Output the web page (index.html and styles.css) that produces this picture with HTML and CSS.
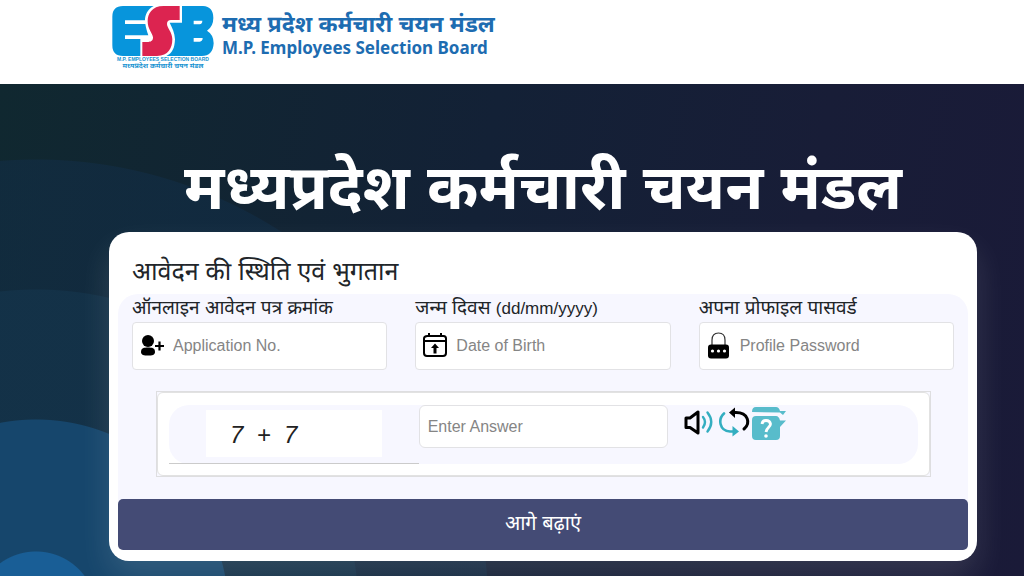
FILE: index.html
```html
<!DOCTYPE html>
<html lang="hi">
<head>
<meta charset="utf-8">
<meta name="viewport" content="width=device-width, initial-scale=1">
<title>M.P. Employees Selection Board</title>
<link rel="stylesheet" href="styles.css">
</head>
<body>
<header class="site-header">
  <a class="brand" href="#">
    <span class="brand-mark">
      <svg class="logo" viewBox="0 0 304 150" role="img" aria-label="ESB">
        <path fill="#0795dc" d="M32 0H124C106 10 98 26 98 43H38V54H99C101 66 104 76 108 88H38V99H84V150H32Q0 150 0 118V32Q0 0 32 0Z"/>
        <path fill="#dc2450" d="M202 0H154C118 0 106 24 106 46C106 70 120 80 122 94C122 104 116 108 108 108H90V150H134C168 150 180 126 180 100C180 78 164 66 164 54C164 46 168 42 176 42H202Z"/>
        <path fill="#0795dc" fill-rule="evenodd" d="M209 0H272Q303 2 303 36Q303 62 284 74Q304 86 304 112Q302 150 268 150H162C180 142 187 126 188 100C187 80 180 66 172 50H209ZM244 44V55H262Q270 54 270 44ZM244 96V107H262Q271 106 271 96Z"/>
      </svg>
      <span class="mark-caption" lang="en">M.P. EMPLOYEES SELECTION BOARD</span>
      <span class="mark-caption mark-caption-hi">मध्यप्रदेश कर्मचारी चयन मंडल</span>
    </span>
    <span class="brand-text">
      <span class="brand-hi">मध्य प्रदेश कर्मचारी चयन मंडल</span>
      <span class="brand-en" lang="en">M.P. Employees Selection Board</span>
    </span>
  </a>
</header>
<main class="hero">
  <h1 class="hero-title">मध्यप्रदेश कर्मचारी चयन मंडल</h1>
  <form class="card">
    <h2 class="card-title">आवेदन की स्थिति एवं भुगतान</h2>
    <div class="panel">
      <div class="fields">
        <div class="field">
          <label class="field-label" for="app-no">ऑनलाइन आवेदन पत्र क्रमांक</label>
          <div class="field-box">
            <svg class="field-icon" viewBox="0 0 26 28" aria-hidden="true"><circle cx="8" cy="9" r="6"/><path d="M1 20C1 16 4 15.500 8 15.500S15 16 15 20C15 23 12 23.500 8 23.500S1 23 1 20Z"/><path d="M15 14H24M19.500 9.500V18.500" fill="none" stroke="#000" stroke-width="2.200"/></svg>
            <input class="field-input" id="app-no" type="text" placeholder="Application No.">
          </div>
        </div>
        <div class="field">
          <label class="field-label" for="dob">जन्म दिवस <span class="format">(dd/mm/yyyy)</span></label>
          <div class="field-box">
            <svg class="field-icon" viewBox="0 0 26 28" aria-hidden="true"><path d="M4.500 4H20.500Q23 4 23 6.500V21Q23 24 20 24H4Q1 24 1 21V6.500Q1 4 4.500 4ZM1 9H23M6 1V4M18 1V4" fill="none" stroke="#000" stroke-width="2"/><path d="M12 11.500L16 16H13.500V21.500H10.500V16H8Z"/></svg>
            <input class="field-input" id="dob" type="text" placeholder="Date of Birth">
          </div>
        </div>
        <div class="field">
          <label class="field-label" for="password">अपना प्रोफाइल पासवर्ड</label>
          <div class="field-box">
            <svg class="field-icon" viewBox="0 0 26 28" aria-hidden="true"><path d="M5 13V8Q5 1 11.500 1T18 8V13" fill="none" stroke="#333" stroke-width="1.200"/><rect x="1" y="12.500" width="21" height="14" rx="3"/><g fill="#fff"><circle cx="5.500" cy="19" r="1.600"/><circle cx="11.500" cy="19" r="1.600"/><circle cx="17.500" cy="19" r="1.600"/></g></svg>
            <input class="field-input" id="password" type="password" placeholder="Profile Password">
          </div>
        </div>
      </div>
      <div class="captcha">
        <div class="captcha-inner">
          <div class="captcha-row">
            <div class="captcha-question"><output class="captcha-sum">7&nbsp; +&nbsp; 7</output></div>
            <input class="answer" type="text" placeholder="Enter Answer" aria-label="Enter Answer">
            <div class="tools">
              <button class="tool" type="button" aria-label="Play audio"><svg viewBox="0 0 34 36" aria-hidden="true"><path d="M2 12H6L14 6V27L6 21.500H2Z" fill="none" stroke="#000" stroke-width="3" stroke-linejoin="round"/><path d="M19 11Q23 16 19 21.500M23.500 6.500Q31 16 23.500 25.500" fill="none" stroke="#33aec0" stroke-width="2.400" stroke-linecap="round"/></svg></button>
              <button class="tool" type="button" aria-label="Refresh"><svg viewBox="0 0 34 36" aria-hidden="true"><path d="M6 7.500C0 13 1 24.500 12 25.500H16" fill="none" stroke="#33aec0" stroke-width="2.600" stroke-linecap="round"/><path d="M14.500 20L21 25.500L14.500 30.500Z" fill="#33aec0"/><path d="M15 6.500H18C30 6.500 33 17 26 23" fill="none" stroke="#000" stroke-width="3" stroke-linecap="round"/><path d="M17 1.500L11 6.500L17 12Z"/></svg></button>
              <button class="tool" type="button" aria-label="Help"><svg viewBox="0 0 34 36" aria-hidden="true"><g fill="#58bccb"><path d="M0 6Q0 1 4 1H24Q27 1 28 5H34L31 9L28 6.500Z"/><path d="M4 10H24Q27 10 28 14.500H34L28 21V30Q28 34 24 34H4Q0 34 0 30V14Q0 10 4 10Z"/></g><path d="M10 18Q10.500 14.500 14 14.500Q18 14.500 18.500 18C18.500 21 14.500 21.500 14 26" fill="none" stroke="#fff" stroke-width="2.800"/><circle cx="14" cy="30" r="1.800" fill="#fff"/></svg></button>
            </div>
          </div>
        </div>
      </div>
      <button class="submit" type="submit">आगे बढ़ाएं</button>
    </div>
  </form>
</main>
</body>
</html>
```
FILE: styles.css
```css
* { box-sizing: border-box; }
body {
  margin: 0;
  min-height: 100vh;
  display: flex;
  flex-direction: column;
  background: #161d34;
  color: #212529;
  font-family: "Liberation Sans", Arial, "Noto Sans Devanagari", sans-serif;
}
.site-header { height: 84px; padding: 6px 112px; background: #fff; }
.brand { display: inline-flex; gap: 8px; color: #1d6cb1; text-decoration: none; }
.brand-mark { width: 102px; display: flex; flex-direction: column; align-items: center; }
.logo { display: block; width: 102px; height: 50px; }
.mark-caption { color: #1893d1; font-size: 5px; line-height: 6px; font-weight: 700; white-space: nowrap; }
.mark-caption-hi { font-size: 7px; line-height: 8px; }
.brand-text { display: flex; flex-direction: column; padding-top: 5px; }
.brand-hi { font-size: 23px; line-height: 26px; font-weight: 700; white-space: nowrap; }
.brand-en { font-family: "Noto Sans", "Open Sans", sans-serif; font-size: 17px; line-height: 22px; font-weight: 700; white-space: nowrap; }
.hero {
  flex: 1;
  padding: 60px 47px 15px 109px;
  background:
    radial-gradient(circle at 36px 528px, #195e96 0 60px, #16466c 61px 192px, rgba(20, 52, 77, .8) 193px 322px, rgba(18, 46, 72, .55) 323px 452px, transparent 453px),
    linear-gradient(100deg, #102830 0%, #132136 45%, #181d37 75%, #1a1a38 100%);
}
.hero-title {
  margin: 0;
  height: 88px;
  color: #fff;
  font-size: 62px;
  line-height: 88px;
  font-weight: 700;
  text-align: center;
  white-space: nowrap;
}
.card {
  padding: 16px 9px 11px;
  border-radius: 20px;
  background: #fff;
  box-shadow: 0 16px 32px rgba(255, 255, 255, .12);
}
.card-title { margin: 0; padding: 0 14px; font-size: 25px; line-height: 46px; font-weight: 400; }
.panel { border-radius: 20px; background: #f7f7ff; }
.fields { display: grid; grid-template-columns: repeat(3, minmax(0, 1fr)); gap: 28px; padding: 0 14px; }
.field-label { display: block; height: 28px; font-size: 19px; line-height: 28px; white-space: nowrap; }
.format { font-size: 17px; }
.field-box {
  display: flex;
  align-items: center;
  gap: 7px;
  height: 48px;
  padding: 0 7px;
  border: 1px solid #e2e2e5;
  border-radius: 4px;
  background: #fff;
}
.field-icon { flex: none; width: 26px; height: 28px; }
.field-input { flex: 1; min-width: 0; padding: 0; border: 0; background: transparent; font-family: inherit; font-size: 16px; }
.field-input::placeholder, .answer::placeholder { color: #858585; opacity: 1; }
.captcha { margin: 21px 37px 22px 38px; border: 1px solid #dedee0; }
.captcha-inner { padding: 12px 11px 11px; border: 1px solid #e2e2e2; border-radius: 6px; background: #fff; }
.captcha-row {
  display: grid;
  grid-template-columns: repeat(3, minmax(0, 1fr));
  align-items: start;
  height: 59px;
  border-radius: 20px;
  background: #f7f7ff;
}
.captcha-question { display: flex; height: 59px; padding: 5px 37px 6px; border-bottom: 1px solid #cbcbcb; }
.captcha-sum {
  flex: 1;
  padding-left: 24px;
  background: #fff;
  color: #222;
  font-size: 24px;
  line-height: 50px;
  font-style: italic;
  white-space: nowrap;
}
.answer {
  width: 100%;
  height: 43px;
  padding: 0 8px;
  border: 1px solid #e2e2e5;
  border-radius: 6px;
  background: #fff;
  font-family: inherit;
  font-size: 16px;
}
.tools { display: flex; padding: 1px 0 0 16px; }
.tool { width: 34px; height: 36px; padding: 0; border: 0; background: transparent; }
.tool svg { display: block; width: 34px; height: 36px; }
.submit {
  display: block;
  width: 100%;
  height: 51px;
  border: 0;
  border-radius: 5px;
  background: #444b75;
  color: #fff;
  font-family: inherit;
  font-size: 20px;
}
```
